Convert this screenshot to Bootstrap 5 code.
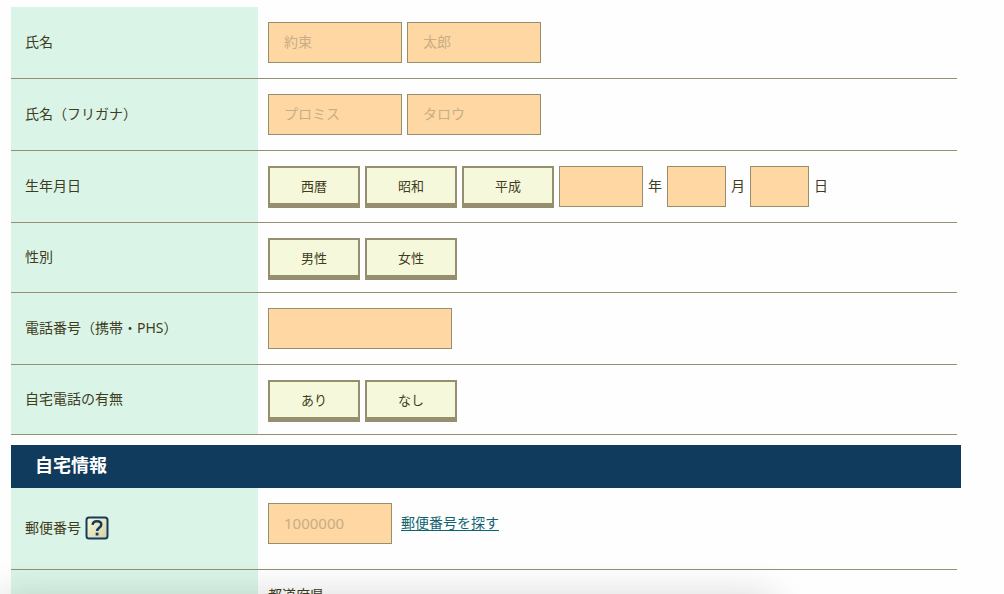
<!DOCTYPE html>
<html lang="ja">
<head>
<meta charset="utf-8">
<meta name="viewport" content="width=device-width, initial-scale=1">
<title>お申込み</title>
<link href="https://cdn.jsdelivr.net/npm/bootstrap@5.3.0/dist/css/bootstrap.min.css" rel="stylesheet">
<style>
:root { --line: #958f6f; --ink: #3f3c22; }
body { background: #fefefe; color: var(--ink); font: 14px/20px "Noto Sans", "Noto Sans CJK JP", sans-serif; }
.page { padding: 7px 43px 0 11px; }
.form-line { border-bottom: 1px solid var(--line); }
.line-name { flex: 0 0 247px; padding: 0 14px 2px; background: #daf5e7; }
.line-body { padding: 15px 10px; gap: 5px; }
.line-body.birth { padding-bottom: 14px; }
.line-body.picks { padding-bottom: 12px; }
.line-body.zip { padding-bottom: 25px; }
.unit { align-self: center; padding-bottom: 2px; }
.form-control, .form-control:focus { width: 134px; height: 41px; padding: 0 15px 2px; border: 1px solid var(--line); border-radius: 0; background: #ffd7a3; color: var(--ink); font-size: 14px; }
.form-control::placeholder { color: #c7ae84; opacity: 1; }
.form-control.w-year { width: 84px; }
.form-control.w-day { width: 59px; }
.form-control.w-phone { width: 184px; }
.form-control.w-zip { width: 124px; font-size: 15px; }
.btn-pick { width: 92px; height: 42px; padding: 0; border: 2px solid var(--line); border-bottom-width: 5px; border-radius: 0; background: #f6f8dc; color: var(--ink); font-size: 13px; line-height: 20px; }
.btn-pick:hover, .btn-pick:focus { background: #eef1c8; border-color: var(--line); }
.section-title { margin: 10px 0 0; padding: 0 24px 2px; background: #113b5c; color: #fff; font-size: 18px; line-height: 41px; font-weight: 700; }
.zip-link { color: #0f6471; text-underline-offset: 2px; }
.bottom-panel { position: fixed; top: 100%; left: 0; width: 77%; height: 80px; box-shadow: 0 0 36px rgba(0, 0, 0, .14); pointer-events: none; }
</style>
</head>
<body>
<form class="page">
  <div class="me-1">
    <div class="form-line d-flex">
      <label class="line-name d-flex align-items-center" for="sei">氏名</label>
      <div class="line-body d-flex">
        <input class="form-control" id="sei" type="text" placeholder="約束">
        <input class="form-control" type="text" placeholder="太郎" aria-label="名">
      </div>
    </div>
    <div class="form-line d-flex">
      <label class="line-name d-flex align-items-center" for="sei-kana">氏名（フリガナ）</label>
      <div class="line-body d-flex">
        <input class="form-control" id="sei-kana" type="text" placeholder="プロミス">
        <input class="form-control" type="text" placeholder="タロウ" aria-label="名（フリガナ）">
      </div>
    </div>
    <div class="form-line d-flex">
      <div class="line-name d-flex align-items-center">生年月日</div>
      <div class="line-body birth d-flex">
        <button class="btn btn-pick" type="button">西暦</button>
        <button class="btn btn-pick" type="button">昭和</button>
        <button class="btn btn-pick" type="button">平成</button>
        <input class="form-control w-year" id="year" type="text">
        <label class="unit" for="year">年</label>
        <input class="form-control w-day" id="month" type="text">
        <label class="unit" for="month">月</label>
        <input class="form-control w-day" id="day" type="text">
        <label class="unit" for="day">日</label>
      </div>
    </div>
    <div class="form-line d-flex">
      <div class="line-name d-flex align-items-center">性別</div>
      <div class="line-body picks d-flex">
        <button class="btn btn-pick" type="button">男性</button>
        <button class="btn btn-pick" type="button">女性</button>
      </div>
    </div>
    <div class="form-line d-flex">
      <label class="line-name d-flex align-items-center" for="phone">電話番号（携帯・PHS）</label>
      <div class="line-body d-flex">
        <input class="form-control w-phone" id="phone" type="tel">
      </div>
    </div>
    <div class="form-line d-flex">
      <div class="line-name d-flex align-items-center">自宅電話の有無</div>
      <div class="line-body picks d-flex">
        <button class="btn btn-pick" type="button">あり</button>
        <button class="btn btn-pick" type="button">なし</button>
      </div>
    </div>
  </div>

  <h2 class="section-title">自宅情報</h2>

  <div class="me-1">
    <div class="form-line d-flex">
      <div class="line-name d-flex align-items-center gap-1">
        <label for="zip">郵便番号</label>
        <button class="btn p-0 border-0 d-flex" type="button" aria-label="ヘルプ">
          <svg width="24" height="24" viewBox="0 0 24 24" aria-hidden="true">
            <defs><linearGradient id="help" x1="0" y1="0" x2="1" y2="1"><stop offset="0" stop-color="#fbfbd9"/><stop offset="1" stop-color="#cfcfa6"/></linearGradient></defs>
            <rect x="1.5" y="1.5" width="21" height="21" rx="2.5" fill="url(#help)" stroke="#153a5c" stroke-width="2"/>
            <path d="M7.6 8.8C7.8 6.4 9.4 5.2 12 5.2c2.7 0 4.3 1.3 4.3 3.3 0 3.1-4.2 3.2-4.2 6.4" fill="none" stroke="#153a5c" stroke-width="2.5"/>
            <rect x="10.7" y="16.7" width="2.8" height="2.8" fill="#153a5c"/>
          </svg>
        </button>
      </div>
      <div class="line-body zip d-flex">
        <input class="form-control w-zip" id="zip" type="text" placeholder="1000000">
        <a class="zip-link unit ms-1" href="#">郵便番号を探す</a>
      </div>
    </div>
    <div class="form-line d-flex">
      <div class="line-name"></div>
      <div class="line-body">都道府県</div>
    </div>
  </div>
</form>
<div class="bottom-panel"></div>
<script src="https://cdn.jsdelivr.net/npm/bootstrap@5.3.0/dist/js/bootstrap.bundle.min.js"></script>
</body>
</html>
